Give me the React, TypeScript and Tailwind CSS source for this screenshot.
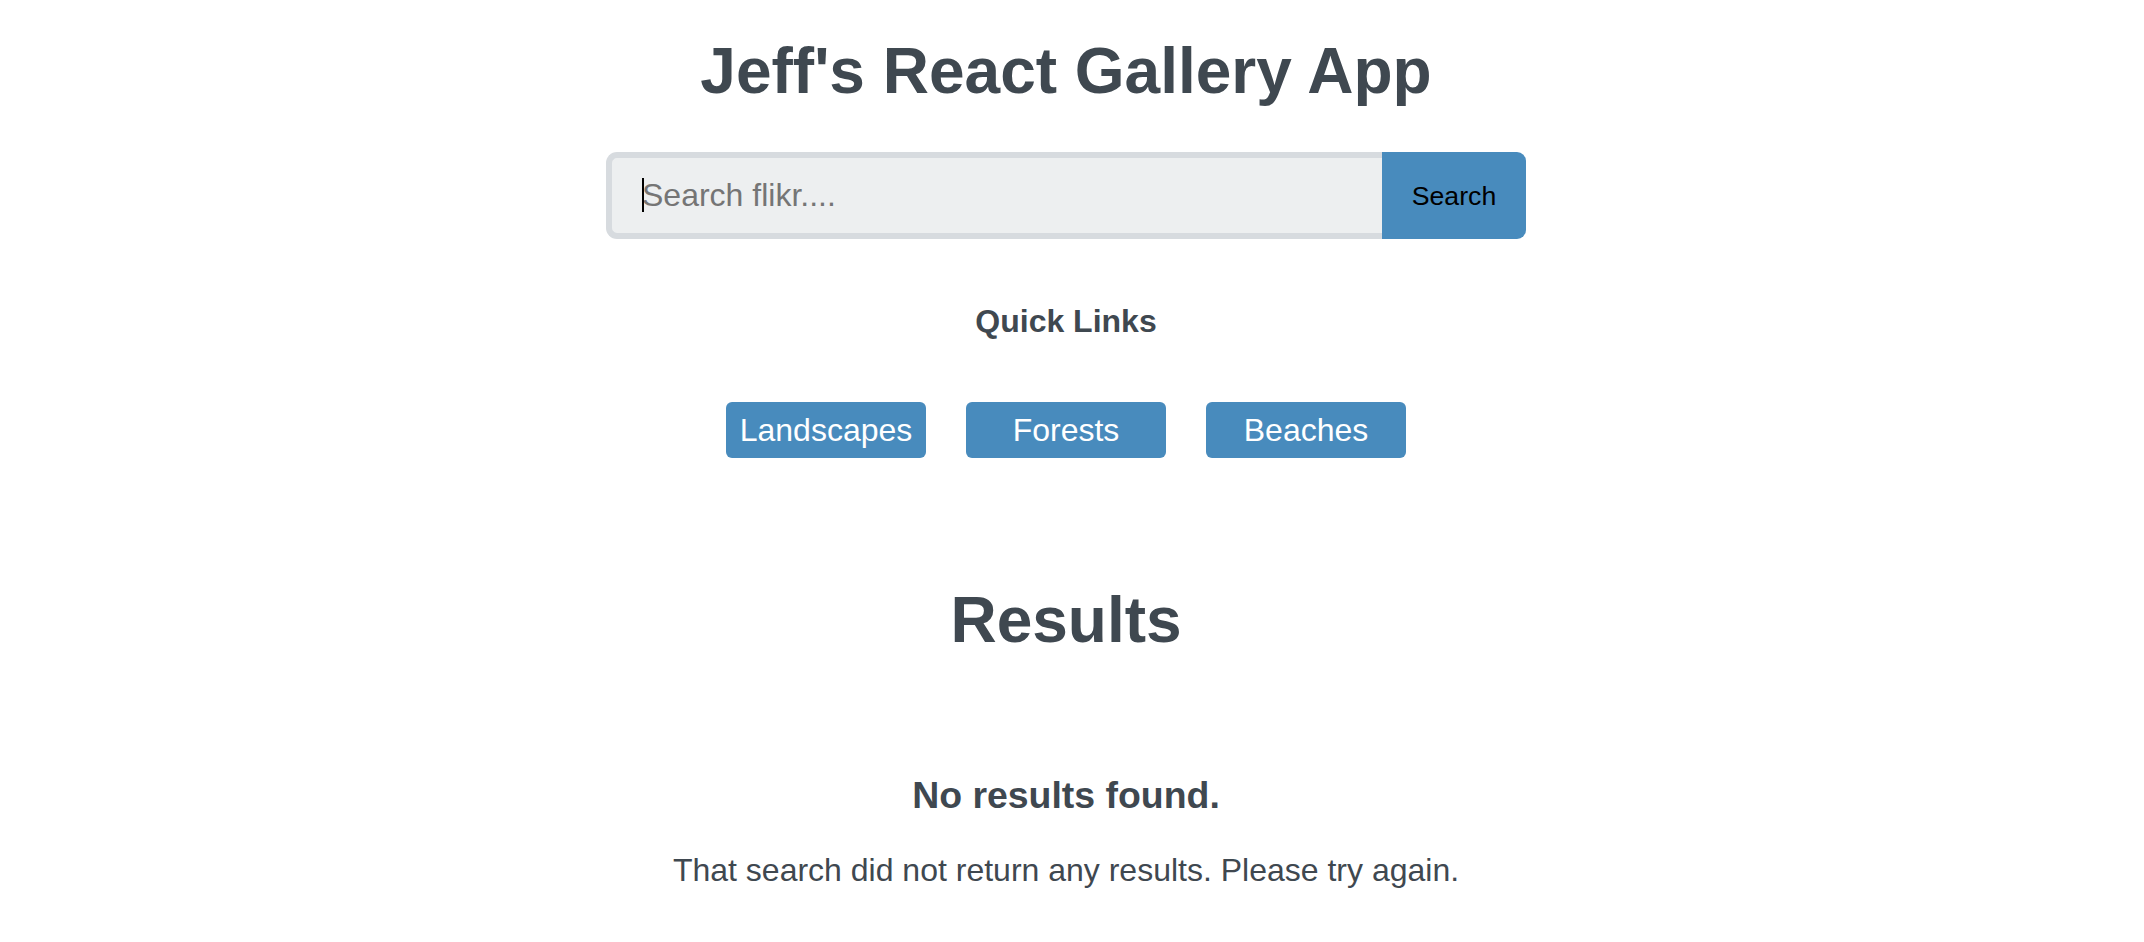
import { useState } from "react";

// quick link topics
const links = ["Landscapes", "Forests", "Beaches"];

export default function App() {
    const [query, setQuery] = useState("");

    return (
        <div className="min-h-screen bg-white font-['Liberation_Sans',Arial,sans-serif] text-[#3f4850]">
            <div className="flex flex-col items-center pr-[12px] pt-[39px] text-center">
                {/* HEADER */}
                <h1 className="text-[64px] leading-[64px] font-bold">
                    Jeff's React Gallery App
                </h1>

                {/* SEARCH */}
                <form
                    className="mt-[49px] flex h-[87px] w-[920px]"
                    onSubmit={(e) => e.preventDefault()}
                >
                    <div className="relative h-full min-w-0 flex-1">
                        <input
                            type="text"
                            autoFocus
                            value={query}
                            onChange={(e) => setQuery(e.target.value)}
                            placeholder="Search flikr...."
                            className="h-full w-full rounded-l-[11px] border-[6px] border-r-0 border-[#d7dbdf] bg-[#edeff0] pl-[30px] pr-[30px] text-[32px] text-[#3f4850] caret-black outline-none placeholder:text-[#757575]"
                        />
                        {/* text caret, as in the focused field */}
                        {query === "" && (
                            <span className="pointer-events-none absolute left-[36px] top-[26px] h-[34px] w-[2px] bg-black" />
                        )}
                    </div>
                    <button
                        type="submit"
                        className="h-full w-[144px] rounded-r-[9px] bg-[#488bbd] text-[26.67px] text-black"
                    >
                        Search
                    </button>
                </form>

                {/* QUICK LINKS */}
                <h3 className="mt-[66px] text-[32px] leading-[32px] font-bold">
                    Quick Links
                </h3>
                <nav className="mt-[65px] flex gap-[40px]">
                    {links.map((link) => (
                        <a
                            key={link}
                            href="#"
                            className="flex h-[56px] w-[200px] items-center justify-center rounded-[6px] bg-[#488bbd] text-[32px] text-white"
                        >
                            {link}
                        </a>
                    ))}
                </nav>

                {/* RESULTS */}
                <h2 className="mt-[130px] text-[64px] leading-[64px] font-bold">
                    Results
                </h2>
                <h3 className="mt-[125px] text-[37.44px] leading-[37px] font-bold">
                    No results found.
                </h3>
                <p className="mt-[40px] text-[32px] leading-[32px]">
                    That search did not return any results. Please try again.
                </p>
            </div>
        </div>
    );
}
